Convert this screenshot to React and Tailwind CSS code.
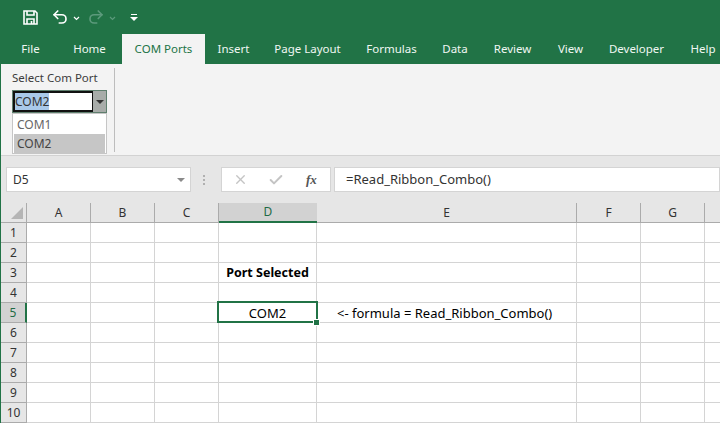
import { Redo2, Undo2, X, Check } from 'lucide-react';

const font = "font-['Noto_Sans','Open_Sans',sans-serif]";

const tabs = [
  { label: 'File', width: 'w-[59px]' },
  { label: 'Home', width: 'w-[62px] pr-[3px]' },
  { label: 'COM Ports', width: 'w-[83px]', active: true },
  { label: 'Insert', width: 'w-[57px]' },
  { label: 'Page Layout', width: 'w-[91px]' },
  { label: 'Formulas', width: 'w-[77px]' },
  { label: 'Data', width: 'w-[50px]' },
  { label: 'Review', width: 'w-[65px]' },
  { label: 'View', width: 'w-[51px]' },
  { label: 'Developer', width: 'w-[81px]' },
  { label: 'Help', width: 'w-[52px]' },
];

const columns = ['A', 'B', 'C', 'D', 'E', 'F', 'G', ''];
const rows = [1, 2, 3, 4, 5, 6, 7, 8, 9, 10];

function Caret({ className }) {
  return <span className={`w-0 h-0 border-x-[4px] border-x-transparent border-t-[4px] ${className}`} />;
}

function Chevron({ color }) {
  return (
    <svg width="7" height="5" viewBox="0 0 7 5" fill="none" stroke={color} strokeWidth="1.2" className="mt-[2px]">
      <path d="M1 1l2.5 2.5L6 1" />
    </svg>
  );
}

function SaveIcon() {
  return (
    <svg width="15" height="15" viewBox="0 0 15 15" fill="none" stroke="white" strokeWidth="1.6">
      <path d="M1 1h11l2 2v11H1z" />
      <path d="M4 1v4h7V1" />
      <path d="M4 14V9h7v5" />
      <path d="M8.5 11v3" />
    </svg>
  );
}

function TitleBar() {
  return (
    <div className="h-[34px] flex items-center pl-[22px]">
      <SaveIcon />
      <Undo2 size={18} color="white" strokeWidth={2.2} className="ml-[13px]" />
      <span className="ml-[4px]"><Chevron color="white" /></span>
      <Redo2 size={18} color="#5c9a7c" strokeWidth={2.2} className="ml-[7px]" />
      <span className="ml-[4px]"><Chevron color="#5c9a7c" /></span>
      <div className="ml-[14px] flex flex-col items-center gap-[2px]">
        <span className="w-[6px] h-[1px] bg-white" />
        <Caret className="border-t-white" />
      </div>
    </div>
  );
}

function TabStrip() {
  return (
    <div className="h-[30px] flex">
      {tabs.map((tab) => (
        <div
          key={tab.label}
          className={`${tab.width} shrink-0 flex items-center justify-center pb-[1px] text-[11.5px] ${
            tab.active ? 'bg-[#f3f3f3] text-[#217346]' : 'text-[#f0f7f3]'
          }`}
        >
          {tab.label}
        </div>
      ))}
    </div>
  );
}

function Ribbon() {
  return (
    <div className="relative h-[92px] bg-[#f3f3f3] border-b border-[#d2d2d2] pl-[11px] pt-[6px]">
      <div className="text-[11.5px] leading-[16px] text-[#3c3c3c]">Select Com Port</div>
      <div className="mt-[4px] w-[95px] h-[23px] flex border border-[#5f7f6e] bg-white">
        <div className="flex-1 border-2 border-[#111] border-r-[1px] flex items-center">
          <span className="bg-[#a9c9ea] text-[12px] leading-[17px] text-[#333]">COM2</span>
        </div>
        <div className="w-[13px] bg-[#a8aca9] flex items-center justify-center">
          <Caret className="border-t-[#333]" />
        </div>
      </div>
      {/* open combo list */}
      <div className="absolute left-[11px] top-[49px] w-[95px] h-[41px] border border-[#c6c6c6] bg-white p-[1px] text-[12px] text-[#666]">
        <div className="h-[19px] pl-[3px] leading-[19px]">COM1</div>
        <div className="h-[19px] pl-[3px] leading-[19px] bg-[#c6c6c6] text-[#444]">COM2</div>
      </div>
      <div className="absolute left-[113px] top-[4px] h-[84px] w-[1px] bg-[#bdbdbd]" />
    </div>
  );
}

function FormulaBar() {
  return (
    <div className="h-[47px] bg-[#e6e6e6] flex pl-[5px] pt-[11px] gap-[11px]">
      <div className="w-[185px] h-[25px] bg-white border border-[#d4d4d4] flex items-center justify-between pl-[6px] pr-[5px] text-[12px] text-[#333]">
        D5
        <Caret className="border-t-[#8a8a8a]" />
      </div>
      <div className="w-[3px] h-[25px] flex flex-col items-center justify-center gap-[2px]">
        <span className="w-[2px] h-[2px] bg-[#b0b0b0]" />
        <span className="w-[2px] h-[2px] bg-[#b0b0b0]" />
        <span className="w-[2px] h-[2px] bg-[#b0b0b0]" />
      </div>
      <div className="flex gap-[3px] flex-1 ml-[5px]">
        <div className="w-[110px] h-[25px] bg-white border border-[#d4d4d4] flex items-center pl-[11px]">
          <X size={15} color="#c4c4c4" strokeWidth={2.2} />
          <Check size={16} color="#c4c4c4" strokeWidth={3} className="ml-[20px]" />
          <span className="ml-[22px] font-['Liberation_Serif',serif] italic text-[13px] font-bold text-[#555]">fx</span>
        </div>
        <div className="flex-1 h-[25px] bg-white border border-[#d4d4d4] flex items-center pl-[11px] text-[13px] text-[#333]">
          =Read_Ribbon_Combo()
        </div>
      </div>
    </div>
  );
}

function Sheet() {
  return (
    <div className="grid grid-cols-[26px_64px_64px_64px_98px_260px_64px_64px_16px] auto-rows-[20px] bg-white text-[12px] text-black">
      <div className="h-[20px] bg-[#e6e6e6] border-r border-b border-[#ababab] relative">
        <span className="absolute right-[3px] bottom-[3px] w-0 h-0 border-l-[12px] border-l-transparent border-b-[12px] border-b-[#b5b5b5]" />
      </div>
      {columns.map((col) => (
        <div
          key={col || 'H'}
          className={`flex items-center justify-center border-b ${
            col === 'D'
              ? 'bg-[#d2d2d2] border-b-2 border-[#217346] text-[#1f6b45]'
              : 'bg-[#e6e6e6] border-r border-[#ababab] text-[#333]'
          }`}
        >
          {col}
        </div>
      ))}
      {rows.map((row) => (
        <Row key={row} row={row} />
      ))}
    </div>
  );
}

function Row({ row }) {
  const selected = row === 5;
  return (
    <>
      <div
        className={`flex items-center justify-center border-r border-b ${
          selected ? 'bg-[#d2d2d2] border-r-2 border-r-[#217346] border-b-[#ababab] text-[#1f6b45]' : 'bg-[#e6e6e6] border-[#ababab] text-[#333]'
        }`}
      >
        {row}
      </div>
      {columns.map((col) => (
        <div key={col || 'H'} className="relative border-r border-b border-[#d4d4d4] flex items-center justify-center whitespace-nowrap pt-[2px] text-[13px]">
          {col === 'D' && row === 3 && <span className="font-bold text-[12.5px]">Port Selected</span>}
          {col === 'D' && selected && (
            <>
              COM2
              <span className="absolute z-10 -left-[2px] -top-[2px] -right-[2px] -bottom-[1px] border-2 border-[#217346]" />
              <span className="absolute z-10 -right-[4px] -bottom-[4px] w-[7px] h-[7px] bg-[#217346] border border-white" />
            </>
          )}
          {col === 'E' && selected && (
            <span className="absolute left-[20px]">{'<- formula = Read_Ribbon_Combo()'}</span>
          )}
        </div>
      ))}
    </>
  );
}

export default function App() {
  return (
    <div className={`${font} w-[720px] h-[423px] overflow-hidden bg-[#217346] pl-[1px]`}>
      <TitleBar />
      <TabStrip />
      <Ribbon />
      <FormulaBar />
      <Sheet />
    </div>
  );
}
